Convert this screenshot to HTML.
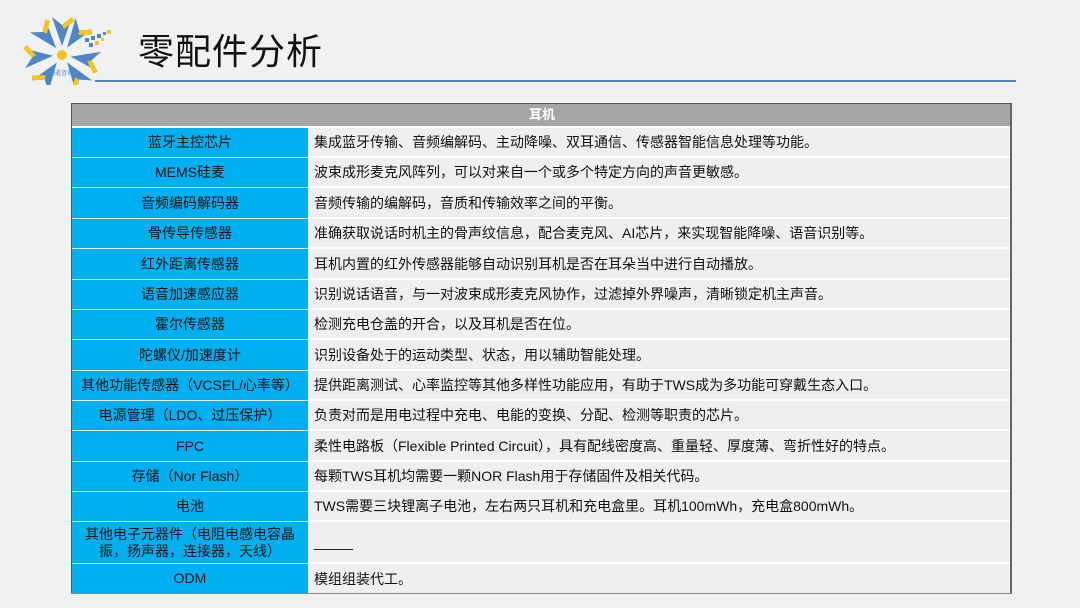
<!DOCTYPE html>
<html><head><meta charset="utf-8"><style>
*{margin:0;padding:0;box-sizing:border-box}
body{width:1080px;height:608px;background:#f0f1f3;position:relative;overflow:hidden;font-family:"Liberation Sans","Noto Sans CJK SC",sans-serif}
.title{position:absolute;left:138px;top:28px;font-size:36px;color:#111;letter-spacing:1px;line-height:48px}
.line{position:absolute;left:95px;top:80px;width:921px;height:2px;background:#5b7fc4}
.tbl{position:absolute;left:71px;top:103px;width:941px;height:491px;border:1px solid #555;border-right:2px solid #666;border-bottom:2px solid #888;background:#fff}
.hd{position:absolute;left:0;top:0;width:100%;height:22px;background:#a6a6a6;color:#fff;font-weight:bold;font-size:13px;line-height:22px;padding-left:457px;text-align:left}
.r{position:absolute;left:0;width:100%;display:flex}
.l{width:236px;background:#00b0f0;color:#111;font-size:14px;text-align:center;display:flex;align-items:center;justify-content:center;line-height:17px;border-bottom:1px solid #e6f4fb}
.v{flex:1;background:#efefef;color:#111;font-size:14px;padding-left:6px;display:flex;align-items:center;border-bottom:2px solid #fff;white-space:nowrap}
</style></head><body>
<svg style="position:absolute;left:15px;top:10px" width="110" height="75" viewBox="0 0 110 75">
<g transform="translate(47,45)">
<g id="a"><polygon points="0,-9 -10,-38 0,-30 10,-38" fill="#4f86c6"/><polygon points="10,-38 0,-30 2,-26 13,-34" fill="#f5c518"/></g>
<use href="#a" transform="rotate(-40)"/>
<use href="#a" transform="rotate(35)"/>
<use href="#a" transform="rotate(100)"/>
<use href="#a" transform="rotate(145)"/>
<use href="#a" transform="rotate(-145)"/>
<use href="#a" transform="rotate(-95)"/>
<circle r="5" fill="#f5c518"/>
</g>
<g fill="#4f86c6"><rect x="70" y="28" width="4" height="4"/><rect x="76" y="26" width="4" height="4"/><rect x="82" y="24" width="4" height="4"/><rect x="74" y="33" width="4" height="4"/><rect x="88" y="22" width="3" height="3"/></g>
<g fill="#f5c518"><rect x="80" y="31" width="4" height="4"/><rect x="92" y="20" width="4" height="4"/><rect x="86" y="28" width="3" height="3"/></g>
<text x="34" y="65" font-size="6" fill="#4f86c6" font-family="Noto Sans CJK SC">创道咨询</text>
</svg>
<div class="title">零配件分析</div>
<div class="line"></div>
<div class="tbl">
<div class="hd">耳机</div>
<div class="r" style="top:24px;height:30px"><div class="l">蓝牙主控芯片</div><div class="v">集成蓝牙传输、音频编解码、主动降噪、双耳通信、传感器智能信息处理等功能。</div></div>
<div class="r" style="top:54px;height:30px"><div class="l">MEMS硅麦</div><div class="v">波束成形麦克风阵列，可以对来自一个或多个特定方向的声音更敏感。</div></div>
<div class="r" style="top:84px;height:31px"><div class="l">音频编码解码器</div><div class="v">音频传输的编解码，音质和传输效率之间的平衡。</div></div>
<div class="r" style="top:115px;height:30px"><div class="l">骨传导传感器</div><div class="v">准确获取说话时机主的骨声纹信息，配合麦克风、AI芯片，来实现智能降噪、语音识别等。</div></div>
<div class="r" style="top:145px;height:31px"><div class="l">红外距离传感器</div><div class="v">耳机内置的红外传感器能够自动识别耳机是否在耳朵当中进行自动播放。</div></div>
<div class="r" style="top:176px;height:30px"><div class="l">语音加速感应器</div><div class="v">识别说话语音，与一对波束成形麦克风协作，过滤掉外界噪声，清晰锁定机主声音。</div></div>
<div class="r" style="top:206px;height:30px"><div class="l">霍尔传感器</div><div class="v">检测充电仓盖的开合，以及耳机是否在位。</div></div>
<div class="r" style="top:236px;height:31px"><div class="l">陀螺仪/加速度计</div><div class="v">识别设备处于的运动类型、状态，用以辅助智能处理。</div></div>
<div class="r" style="top:267px;height:30px"><div class="l">其他功能传感器（VCSEL/心率等）</div><div class="v">提供距离测试、心率监控等其他多样性功能应用，有助于TWS成为多功能可穿戴生态入口。</div></div>
<div class="r" style="top:297px;height:30px"><div class="l">电源管理（LDO、过压保护）</div><div class="v">负责对而是用电过程中充电、电能的变换、分配、检测等职责的芯片。</div></div>
<div class="r" style="top:327px;height:31px"><div class="l">FPC</div><div class="v">柔性电路板（Flexible Printed Circuit），具有配线密度高、重量轻、厚度薄、弯折性好的特点。</div></div>
<div class="r" style="top:358px;height:30px"><div class="l">存储（Nor Flash）</div><div class="v">每颗TWS耳机均需要一颗NOR Flash用于存储固件及相关代码。</div></div>
<div class="r" style="top:388px;height:30px"><div class="l">电池</div><div class="v">TWS需要三块锂离子电池，左右两只耳机和充电盒里。耳机100mWh，充电盒800mWh。</div></div>
<div class="r" style="top:418px;height:42px"><div class="l">其他电子元器件（电阻电感电容晶<br>振，扬声器，连接器，天线）</div><div class="v">_____</div></div>
<div class="r" style="top:460px;height:29px"><div class="l" style="border:none">ODM</div><div class="v" style="border:none">模组组装代工。</div></div>
</div>
</body></html>
